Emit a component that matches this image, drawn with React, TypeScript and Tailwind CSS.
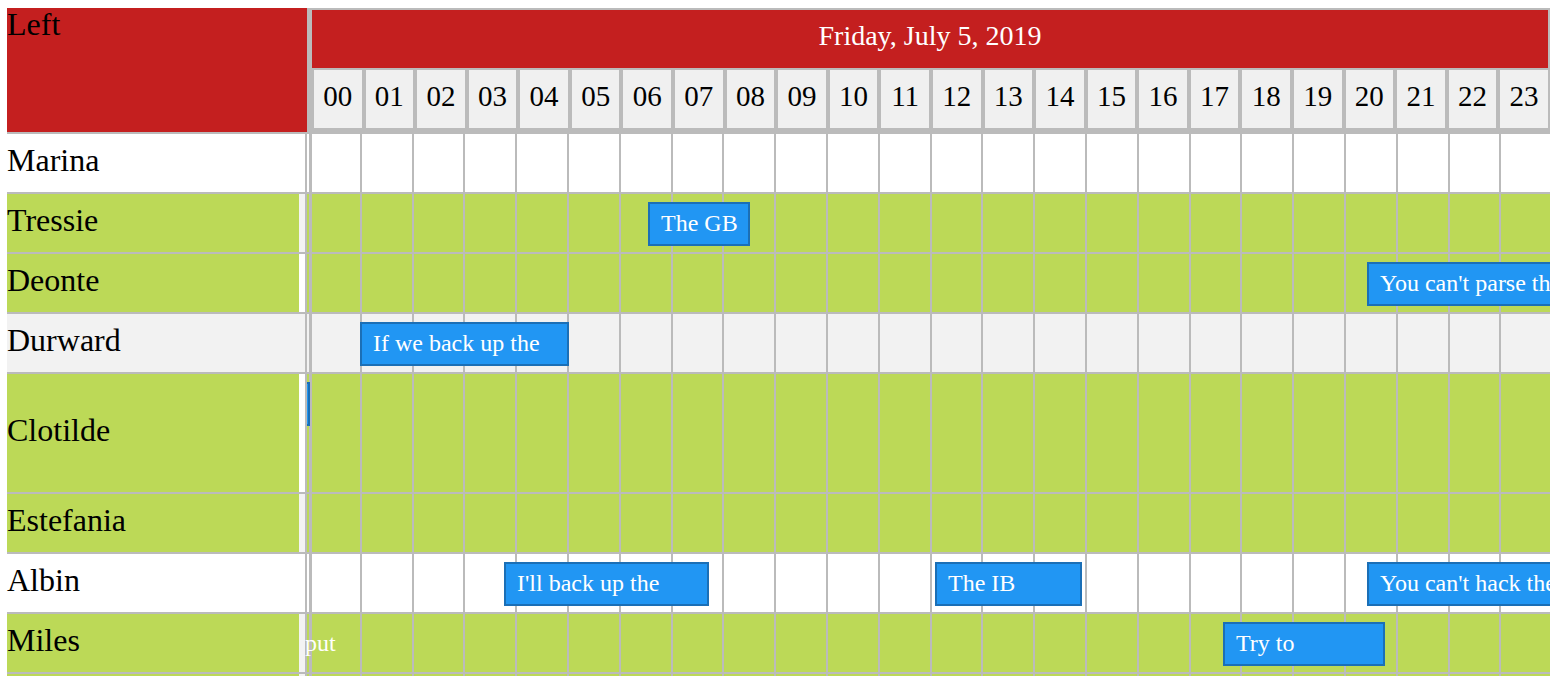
import React from "react";

interface SchedEvent {
    left: number;
    width: number;
    text: string;
}

interface Resource {
    id: string;
    name: string;
    bg: string;
    strip: string;
    tall?: boolean;
    events: SchedEvent[];
    spill?: string;
}

const HOURS = Array.from({ length: 24 }, (_, i) => String(i).padStart(2, "0"));

// positions are px from the left edge of the timeline column
const RESOURCES: Resource[] = [
    { id: "r1", name: "Marina", bg: "bg-white", strip: "bg-white", events: [] },
    {
        id: "r2", name: "Tressie", bg: "bg-[#bcd957]", strip: "bg-[#f3f3f3]",
        events: [{ left: 341, width: 102, text: "The GB" }],
    },
    {
        id: "r3", name: "Deonte", bg: "bg-[#bcd957]", strip: "bg-white",
        events: [{ left: 1060, width: 280, text: "You can't parse the" }],
    },
    {
        id: "r4", name: "Durward", bg: "bg-[#f2f2f2]", strip: "bg-[#f2f2f2]",
        events: [{ left: 53, width: 209, text: "If we back up the" }],
    },
    {
        id: "r5", name: "Clotilde", bg: "bg-[#bcd957]", strip: "bg-white", tall: true,
        // only the right edge of this one is still in view
        events: [{ left: -100, width: 103, text: "" }],
    },
    { id: "r6", name: "Estefania", bg: "bg-[#bcd957]", strip: "bg-[#f3f3f3]", events: [] },
    {
        id: "r7", name: "Albin", bg: "bg-white", strip: "bg-white",
        events: [
            { left: 197, width: 205, text: "I'll back up the" },
            { left: 628, width: 147, text: "The IB" },
            { left: 1060, width: 280, text: "You can't hack the" },
        ],
    },
    {
        id: "r8", name: "Miles", bg: "bg-[#bcd957]", strip: "bg-[#f3f3f3]",
        events: [{ left: 916, width: 162, text: "Try to" }],
        spill: "put",
    },
    // next row, only its top border peeks in at the bottom
    { id: "r9", name: "", bg: "bg-[#bcd957]", strip: "bg-[#f3f3f3]", events: [] },
];

const EventBox: React.FC<{ ev: SchedEvent }> = ({ ev }) => (
    <div
        className="absolute top-[8px] h-[44px] flex items-center pb-[3px] pl-[11px] bg-[#2196f3] border-2 border-[#1b6fb6] text-white text-[24px] whitespace-nowrap overflow-hidden z-10"
        style={{ left: ev.left, width: ev.width }}
    >
        {ev.text}
    </div>
);

const Row: React.FC<{ res: Resource }> = ({ res }) => (
    <div
        className={`relative flex border-t-2 border-[#bbbbbb] ${res.tall ? "h-[120px]" : "h-[60px]"} ${res.bg}`}
    >
        {/* resource name cell */}
        <div className="flex w-[300px] shrink-0">
            <div className="flex w-[292px] items-center pb-[6px] text-[32px] text-black">
                {res.name}
            </div>
            <div className={`w-[6px] ${res.strip}`} />
            <div className="w-[2px] bg-[#bbbbbb]" />
        </div>

        {/* timeline cell */}
        <div className="relative flex-1 overflow-hidden">
            <div className="ml-[3px] flex h-full w-[1243px]">
                {HOURS.map((h) => (
                    <div key={h} className="flex-1 border-r-2 border-[#bbbbbb]" />
                ))}
            </div>
            <div className="absolute left-[2px] top-0 bottom-0 w-[3px] bg-[#bbbbbb]" />
            {res.events.map((ev, i) => (
                <EventBox key={i} ev={ev} />
            ))}
        </div>

        {res.spill && (
            <div className="absolute left-[298px] top-[8px] h-[44px] flex items-center pb-[3px] text-white text-[24px] z-20">
                {res.spill}
            </div>
        )}
    </div>
);

export default function App() {
    return (
        <div className="h-screen overflow-hidden bg-white pl-[7px] pr-[6px] pt-[8px] font-['Liberation_Serif','Times_New_Roman',serif]">
            {/* header */}
            <div className="flex">
                <div className="h-[124px] w-[300px] shrink-0 bg-[#c41f1f] text-[32px] leading-none text-black">
                    Left
                </div>
                <div className="flex-1 bg-[#bbbbbb] pl-[5px] pr-[2px] pt-[2px]">
                    <div className="flex h-[58px] items-center justify-center bg-[#c41f1f] pb-[6px] text-[28px] text-white">
                        Friday, July 5, 2019
                    </div>
                    <div className="flex gap-[4px] pl-[2px] pt-[2px] pb-[4px]">
                        {HOURS.map((h) => (
                            <div
                                key={h}
                                className="flex h-[58px] flex-1 items-center justify-center bg-[#f0f0f0] pb-[4px] text-[29px] text-black"
                            >
                                {h}
                            </div>
                        ))}
                    </div>
                </div>
            </div>

            {/* rows */}
            {RESOURCES.map((res) => (
                <Row key={res.id} res={res} />
            ))}
        </div>
    );
}
